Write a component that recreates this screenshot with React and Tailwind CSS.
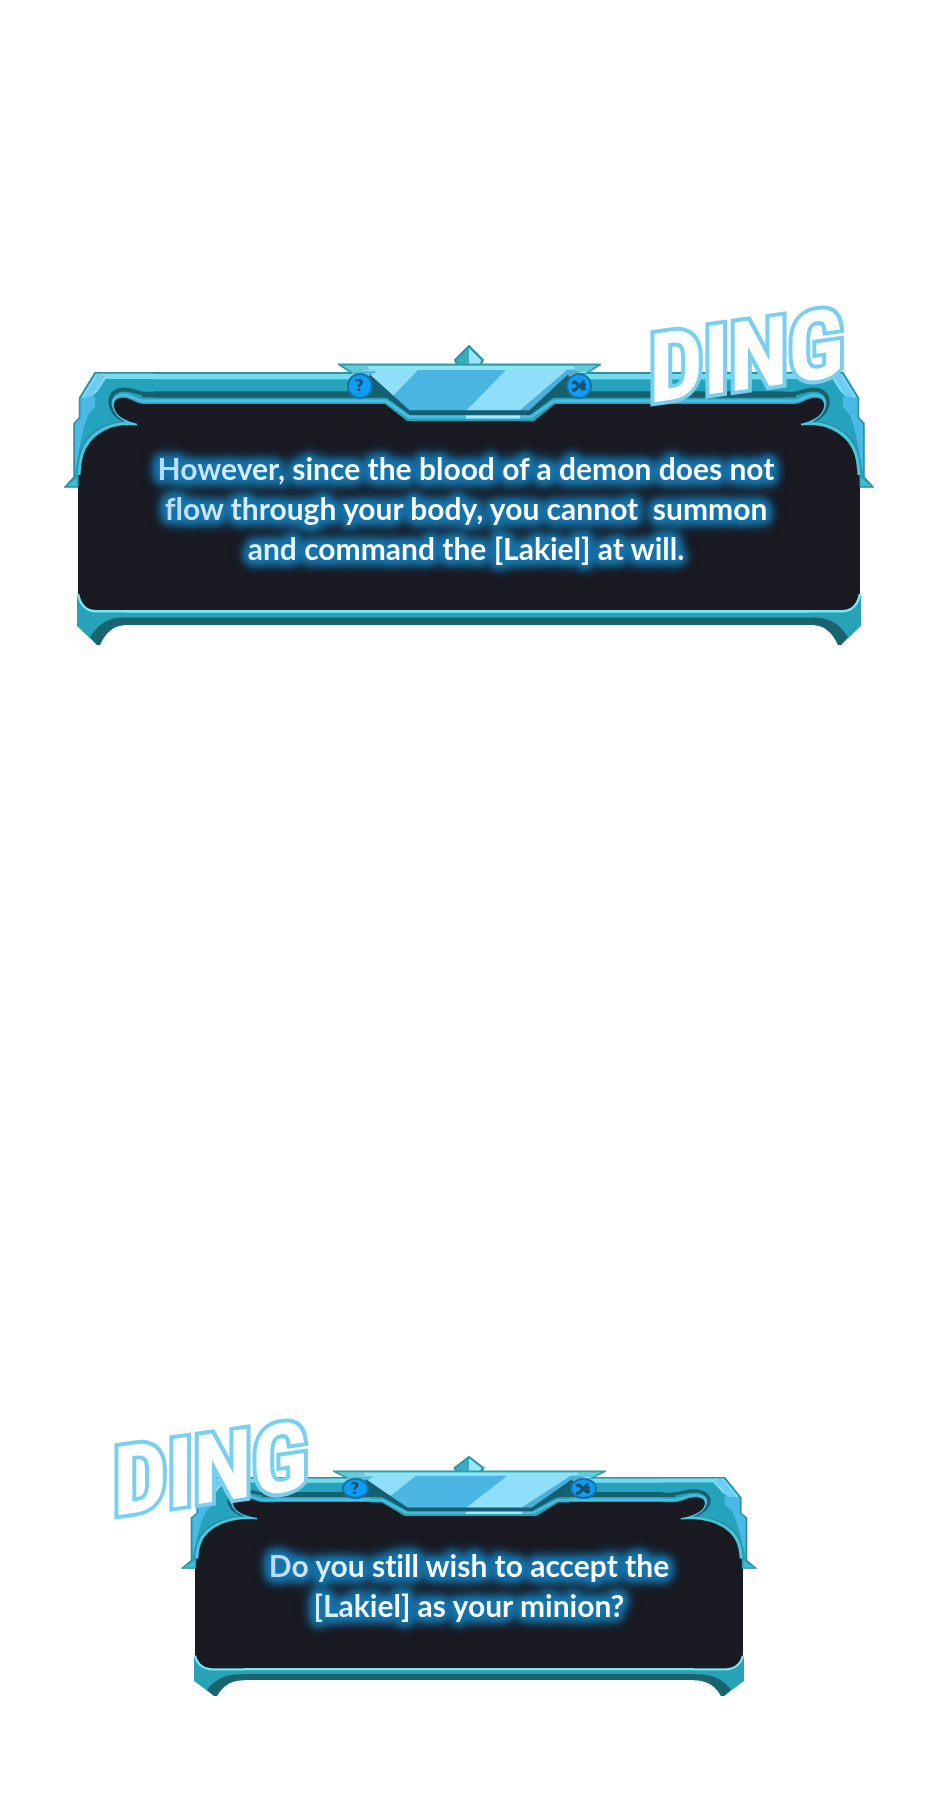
import React from 'react';
import clsx from 'clsx';

const Corner = ({ className }) => (
    <svg viewBox="0 0 90 116" preserveAspectRatio="none" className={className} aria-hidden="true">
        {/* base plate */}
        <path
            d="M90 0H31L15.5 26V45.5L10 51.5V105L1 115H14.5V101C15 93 16 89 17 86C22 72 30 61 41 57C48 53 57 52 74 52C62 50 52 43 50 36C48 29 53 26 58 26C68 26 70 32 79 32H90Z"
            fill="#25a3bd"
        />
        {/* top highlight */}
        <path d="M90 1.5H36L42 7H90Z" fill="#72dcee" />
        {/* facets */}
        <path d="M32 1.5L17 26L27 25L33 20L43 5L41 2Z" fill="#84d9f7" />
        <path d="M34 2L19 26L27 25L41 4Z" fill="#6bcdf2" />
        <path d="M16.5 26.5L31 24V35L24 43L20 55L16 73L11 100V52L16.5 46Z" fill="#4ab9e8" />
        {/* lower arc */}
        <path d="M74 51C50 46 32 56 22 68C16 77 14 88 13.5 104" fill="none" stroke="#2b8fa6" strokeWidth="1.5" />
        <path d="M73 52C50 49 34 58 25 69C18 78 16 87 15 103" fill="none" stroke="#48c6dc" strokeWidth="3" />
        {/* curl */}
        <path d="M90 22.5H84C72 21 69 17.5 60 17.5C49 18 45.5 25 46.5 32C48 40 54 46 60 48" fill="none" stroke="#17606e" strokeWidth="4" />
        <path d="M90 22.5H78" fill="none" stroke="#17606e" strokeWidth="5.5" />
        <path d="M90 29H79C71 28 67 22.5 59 23C51 24 48 28 49.5 34C51 41 56 46 65 50" fill="none" stroke="#4abce0" strokeWidth="3" />
        <path d="M90 32H79C72 32 68 26 59 26C51 26 48 31 51 38C54 45 62 49 74 52C80 52 85 48 90 45Z" fill="#191a22" />
        <path d="M90 0.75H31L15.5 26V45.5L10 51.5V105L1 115H14" fill="none" stroke="#2c8fa2" strokeWidth="1.5" />
        <path d="M3 114L13 106V114Z" fill="#43bfd3" />
    </svg>
);

const Foot = ({ className }) => (
    <svg viewBox="0 0 50 52" preserveAspectRatio="none" className={className} aria-hidden="true">
        <path d="M0 0C2 10 8 17 18 17H50V32H47C36 33 28 40 23 52H20L0 33Z" fill="#27a2b7" />
        <path d="M50 24.5H45C29 25 20 33 13 44L20 52H23C28 40 36 33 47 32H50Z" fill="#1a6470" />
        <path d="M1 1C3 11 9 18.25 19 18.25H50" fill="none" stroke="#7ce6f4" strokeWidth="2.5" />
    </svg>
);

const Plaque = ({ className }) => (
    <svg viewBox="0 0 263 76" preserveAspectRatio="none" className={className} aria-hidden="true">
        {/* gem */}
        <path d="M131 1L145 15L142 22H120L117 15Z" fill="#38adbf" />
        <path d="M131 3L143 15L141 22H131Z" fill="#9be5fa" />
        <path d="M131 1L145 15L142 22H120L117 15Z" fill="none" stroke="#2f93a6" strokeWidth="2" />
        {/* recess and rim */}
        <path d="M20 40L30 52H46L70 73H194L218 52H233L243 40L225 28H38Z" fill="#17606e" />
        <path d="M36 53H49L72 70H192L215 53H228V59H217L196 76H69L47 59H36Z" fill="#28a1b7" />
        <path d="M36 56H48L71 72H193L216 56H228" fill="none" stroke="#4abce0" strokeWidth="3" />
        <path d="M128 72H182" stroke="#a4ebfb" strokeWidth="3" />
        {/* plate */}
        <path d="M1 19.5H262L248 28L231 29L192 66H71L31 30L13 28Z" fill="#8fdffa" />
        <path d="M80 25H168L128 66H71L55 51Z" fill="#4bb6e1" />
        <path d="M229 25H248L231 31L192 66H181Z" fill="#4baedb" />
        <path d="M10 26H39L31 32Z" fill="#54b9df" />
        <path d="M31 31L71 67H192L231 31" fill="none" stroke="#145e77" strokeWidth="3.5" />
        <path d="M2 19.5H261L248 27L225 24H38L13 27Z" fill="#65cbdc" />
        <path d="M30 22.5H236" stroke="#8ce7f5" strokeWidth="3" />
        <path d="M14 28L1 19.5H262L249 28" fill="none" stroke="#2f9bac" strokeWidth="2" />
    </svg>
);

const Ding = ({ className }) => (
    <span
        className={clsx(
            'absolute -skew-y-8 whitespace-nowrap font-["Liberation_Sans_Narrow","Roboto_Condensed","Liberation_Sans",sans-serif] text-[96px] leading-none font-bold text-white [-webkit-text-stroke:8px_#78cfee] [paint-order:stroke_fill]',
            className
        )}
    >
        DING
    </span>
);

const roundButton =
    'flex items-center justify-center rounded-[50%] border-2 border-[#17719f] bg-[#0d9df2] text-[#15506f]';

const SystemPanel = ({ compact = false, className, children, ding }) => {
    const cornerSize = compact ? 'h-[92px] w-[94px]' : 'h-[116px] w-[90px]';
    const footSize = compact ? 'h-[41px] w-[50px]' : 'h-[52px] w-[50px]';
    const buttonSize = compact ? 'h-[21px] w-[27px]' : 'h-[26px] w-[26px]';

    return (
        <section className={clsx('relative mx-auto grid w-full', className)}>
            {/* Message, in the same grid cell as the frame */}
            <div
                className={clsx(
                    'col-start-1 row-start-1 mx-[14px] flex justify-center rounded-t-[56px] rounded-b-2xl bg-[#191a22]',
                    compact ? 'mb-6 px-4 pt-[68px] pb-[47px]' : 'mb-8 pt-[76px] pr-[22px] pb-[45px] pl-4'
                )}
            >
                <p className="bg-linear-to-r from-[#b5daf1] to-white to-30% bg-clip-text text-center font-[Lato,sans-serif] text-[30px] leading-10 font-bold whitespace-pre-wrap text-transparent [font-variant-ligatures:no-common-ligatures] [filter:drop-shadow(0_0_4px_#1674ab)_drop-shadow(0_0_4px_#1674ab)_drop-shadow(0_0_4px_#1674ab)_drop-shadow(0_0_3px_#1674ab)]">
                    {children}
                </p>
            </div>

            <div className="col-start-1 row-start-1 flex flex-col justify-between">
                <div className="grid">
                    <div className="col-start-1 row-start-1 flex items-start">
                        <Corner className={cornerSize} />
                        <div
                            className={clsx(
                                'flex-1 bg-[linear-gradient(#2c8fa2_0_5%,#72dcee_7%_21%,#25a3bd_25%_58%,#17606e_62%_79%,#28a1b7_82%_84%,#4abce0_87%_94%,#28a1b7_97%)]',
                                compact ? 'h-[25px]' : 'h-8'
                            )}
                        />
                        <Corner className={clsx('-scale-x-100', cornerSize)} />
                    </div>
                    <div
                        className={clsx(
                            'col-start-1 row-start-1 grid self-start justify-self-center',
                            compact ? '-mt-[21px] w-[273px]' : '-mt-[27px] w-[263px]'
                        )}
                    >
                        <Plaque className={clsx('col-start-1 row-start-1 w-full', compact ? 'h-[60px]' : 'h-[76px]')} />
                        <div
                            className={clsx(
                                'z-10 col-start-1 row-start-1 flex items-start justify-between px-[9px]',
                                compact ? 'pt-[22px]' : 'pt-[28px]'
                            )}
                        >
                            <button type="button" aria-label="Help" className={clsx(roundButton, buttonSize)}>
                                <span className="font-['DejaVu_Sans',sans-serif] text-base leading-none font-bold">?</span>
                            </button>
                            <button type="button" aria-label="Close" className={clsx(roundButton, buttonSize)}>
                                <svg viewBox="0 0 16 12" className="h-3 w-4" fill="none" stroke="currentColor" strokeWidth="3">
                                    <path d="M1 3L4 2L12 9L15 8M1 10H4L12 2V5H15" />
                                </svg>
                            </button>
                        </div>
                    </div>
                </div>

                <div className="flex items-start px-[13px]">
                    <Foot className={footSize} />
                    <div className={clsx('flex-1', compact ? 'pt-[13px]' : 'pt-[17px]')}>
                        <div
                            className={clsx(
                                'bg-[linear-gradient(#7ce6f4_0_15%,#27a2b7_22%_48%,#1a6470_54%)]',
                                compact ? 'h-3' : 'h-[15px]'
                            )}
                        />
                    </div>
                    <Foot className={clsx('-scale-x-100', footSize)} />
                </div>
            </div>
            {ding}
        </section>
    );
};

const App = () => {
    return (
        <main className="min-h-screen bg-white pt-[372px] pr-[66px] pb-[108px] pl-16">
            <SystemPanel className="max-w-[810px]" ding={<Ding className="-top-16 right-[30px]" />}>
                {'However, since the blood of a demon does not\nflow through your body, you cannot  summon\nand command the [Lakiel] at will.'}
            </SystemPanel>
            <SystemPanel compact className="mt-[832px] max-w-[576px]" ding={<Ding className="-top-14 -left-[68px]" />}>
                {'Do you still wish to accept the\n[Lakiel] as your minion?'}
            </SystemPanel>
        </main>
    );
};

export default App;
